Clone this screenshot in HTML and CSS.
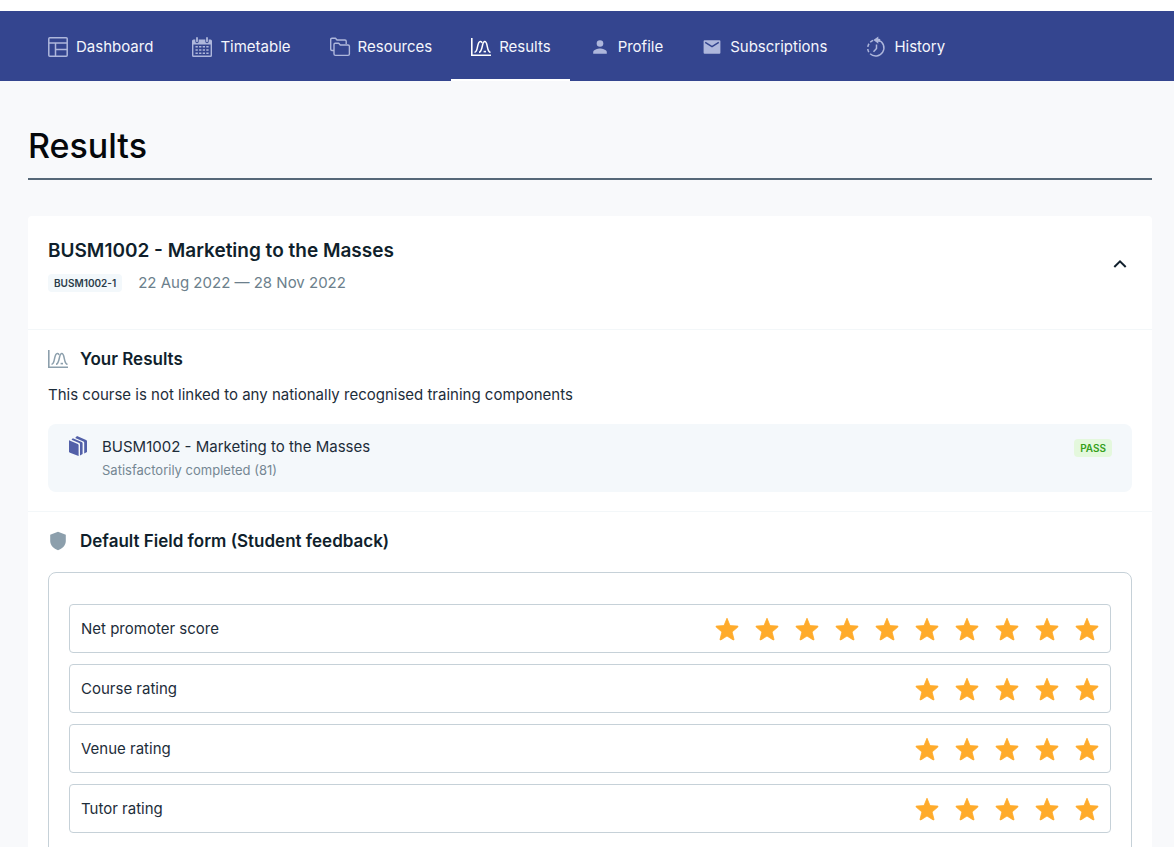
FILE: index.html
```html
<!DOCTYPE html>
<html lang="en">
<head>
<meta charset="utf-8">
<meta name="viewport" content="width=device-width, initial-scale=1">
<title>Results</title>
<link rel="stylesheet" href="styles.css">
</head>
<body>
<svg class="sprite" aria-hidden="true">
  <symbol id="star" viewBox="0 0 24 24"><path d="M12 1.2 15 8.6 22.6 9.1Q23.5 9.4 22.8 10.1L17.1 14.9 19 22.4Q18.9 23.3 18.1 22.9L12 19 5.9 22.9Q5.1 23.3 5 22.4L6.9 14.9 1.2 10.1Q.5 9.4 1.4 9.1L9 8.6Z" fill="currentColor" stroke="currentColor" stroke-width=".8" stroke-linejoin="round"/></symbol>
  <symbol id="chart" viewBox="0 0 20 20"><g fill="none" stroke="currentColor"><path d="M.8 1v17.2H20" stroke-width="1.6"/><path d="M3.500 15.200C7.500 15.200 5.500 5 9.300 4.600c1-.1 1.500.4 1.800 1.400" stroke-width="1.500"/><path d="M8 15.200c4 0 2.500-10.600 5.800-10.600S15.500 15.200 19.500 15.200" stroke-width="1.500"/><path d="M12.600 14.600h2.400" stroke-width="1.600"/></g></symbol>
</svg>
<header class="topbar">
  <nav class="nav" aria-label="Main">
    <a class="nav-link" href="#dashboard"><svg class="icon" viewBox="0 0 20 20"><g fill="none" stroke="currentColor" stroke-width="1.5"><rect x=".8" y=".8" width="18.4" height="18.4" rx="1"/><path d="M1 6h18M7.5 6v13M7.5 12.5H19"/></g></svg>Dashboard</a>
    <a class="nav-link" href="#timetable"><svg class="icon" viewBox="0 0 20 20"><path fill="currentColor" fill-rule="evenodd" d="M1.5 2.500h1.800V4.500a1.700 1.700 0 0 0 3.400 0V2.500h6.600v2a1.700 1.700 0 0 0 3.400 0v-2h1.800Q20 2.500 20 4v14.500Q20 20 18.500 20h-17Q0 20 0 18.500V4Q0 2.500 1.500 2.500ZM1.400 7.500v11.100h17.200V7.500Z"/><path stroke="currentColor" stroke-width="1.800" stroke-linecap="round" d="M5 .9v3.400M15 .9v3.400"/><path stroke="currentColor" stroke-width="1.600" stroke-dasharray="2.300 1.300" d="M3.500 9.800h13.100M3.500 13h13.100M3.500 16.200h13.100"/></svg>Timetable</a>
    <a class="nav-link" href="#resources"><svg class="icon" viewBox="0 0 20 20"><g fill="none" stroke="currentColor" stroke-width="1.400" stroke-linejoin="round"><path d="M4 13.500H2Q.7 13.500.7 12V2.500Q.7 1.200 2 1.200h3.500L7 3h8q1.200 0 1.200 1.200V7"/><path d="M4 7.500Q4 6.200 5.200 6.200h3.500L10.300 8H18q1.400 0 1.400 1.300v7.700q0 1.400-1.400 1.400H5.500Q4 18.400 4 17Z"/></g></svg>Resources</a>
    <a class="nav-link active" href="#results" aria-current="page"><svg class="icon"><use href="#chart"/></svg>Results</a>
    <a class="nav-link" href="#profile"><svg class="icon" viewBox="0 0 20 20"><g fill="currentColor"><circle cx="10" cy="6.500" r="3.300"/><path d="M3.200 16.700v-1.800c0-2.300 4.600-3.500 6.800-3.500s6.800 1.200 6.800 3.500v1.800Z"/></g></svg>Profile</a>
    <a class="nav-link" href="#subscriptions"><svg class="icon" viewBox="0 0 20 20"><path fill="currentColor" d="M2.600 3.200h14.800q1 0 1 1v11.600q0 1-1 1H2.600q-1 0-1-1V4.200q0-1 1-1Z"/><path fill="none" stroke="#34458f" stroke-width="1.500" d="m3.200 5.400 6.800 4.300 6.800-4.300"/></svg>Subscriptions</a>
    <a class="nav-link" href="#history"><svg class="icon" viewBox="0 0 20 20"><g fill="none" stroke="currentColor" stroke-width="1.500"><path d="M12.500 3.100a8.200 8.200 0 1 1-8.400 13.700"/><path d="M2.800 15.200a8.200 8.200 0 0 1 5-12" stroke-dasharray="3.400 2"/><path d="M10.500 7.500v4L7.500 14.800"/></g><path fill="currentColor" d="m7.400 3 4.900-3.500v2.200l2 .4-.5 3-1.500-.4v2Z"/></svg>History</a>
  </nav>
</header>
<main class="page">
  <h1 class="page-title">Results</h1>
  <article class="card">
    <header class="course">
      <div class="course-info">
        <h2 class="course-title">BUSM1002 - Marketing to the Masses</h2>
        <div class="course-meta"><span class="tag">BUSM1002-1</span><span>22 Aug 2022 — 28 Nov 2022</span></div>
      </div>
      <button class="toggle" type="button" aria-label="Collapse course" aria-expanded="true"><svg class="chevron" viewBox="0 0 14 14"><path d="m1.300 10 5.700-5.700L12.700 10" fill="none" stroke="currentColor" stroke-width="2"/></svg></button>
    </header>
    <section class="section">
      <h3 class="section-title"><svg class="icon"><use href="#chart"/></svg>Your Results</h3>
      <p class="note">This course is not linked to any nationally recognised training components</p>
      <div class="result">
        <svg class="icon books" viewBox="0 0 20 20"><g fill="currentColor"><path d="M1 4.200 9.800 7.900q.8.400.8 1.200V20L2 16.800Q1 16.300 1 15.300Z"/><path d="m4.800 2.200 8.900 3.700q.9.400.9 1.400v10.800l-2.600 1.400V8.200q0-.9-.8-1.200L3.500 3.700Z"/><path d="m9 .1 9.100 3.800q.9.400.9 1.400v10.800l-2.800 1.500V6.600q0-.9-.8-1.200L7.200 1.900Z"/></g></svg>
        <div class="result-text">
          <p class="result-name">BUSM1002 - Marketing to the Masses</p>
          <p class="result-status">Satisfactorily completed (81)</p>
        </div>
        <span class="tag pass">PASS</span>
      </div>
    </section>
    <section class="section">
      <h3 class="section-title"><svg class="icon" viewBox="0 0 20 20"><path fill="currentColor" d="M10 .8 17.800 3.800v6.200c0 4.500-3.500 7.600-7.800 9.200C5.700 17.600 2.200 14.500 2.200 10V3.800Z"/></svg>Default Field form (Student feedback)</h3>
      <div class="feedback">
        <div class="rating"><span>Net promoter score</span><span class="stars" role="img" aria-label="10 stars"><svg class="star"><use href="#star"/></svg><svg class="star"><use href="#star"/></svg><svg class="star"><use href="#star"/></svg><svg class="star"><use href="#star"/></svg><svg class="star"><use href="#star"/></svg><svg class="star"><use href="#star"/></svg><svg class="star"><use href="#star"/></svg><svg class="star"><use href="#star"/></svg><svg class="star"><use href="#star"/></svg><svg class="star"><use href="#star"/></svg></span></div>
        <div class="rating"><span>Course rating</span><span class="stars" role="img" aria-label="5 stars"><svg class="star"><use href="#star"/></svg><svg class="star"><use href="#star"/></svg><svg class="star"><use href="#star"/></svg><svg class="star"><use href="#star"/></svg><svg class="star"><use href="#star"/></svg></span></div>
        <div class="rating"><span>Venue rating</span><span class="stars" role="img" aria-label="5 stars"><svg class="star"><use href="#star"/></svg><svg class="star"><use href="#star"/></svg><svg class="star"><use href="#star"/></svg><svg class="star"><use href="#star"/></svg><svg class="star"><use href="#star"/></svg></span></div>
        <div class="rating"><span>Tutor rating</span><span class="stars" role="img" aria-label="5 stars"><svg class="star"><use href="#star"/></svg><svg class="star"><use href="#star"/></svg><svg class="star"><use href="#star"/></svg><svg class="star"><use href="#star"/></svg><svg class="star"><use href="#star"/></svg></span></div>
      </div>
    </section>
  </article>
</main>
</body>
</html>
```
FILE: styles.css
```css
* { box-sizing: border-box; }
html { background: #f8f9fb; overflow-x: hidden; scrollbar-width: none; }
body { margin: 0; font-family: Inter, "Liberation Sans", sans-serif; font-size: 15px; line-height: 20px; color: #1d2d3a; }
h1, h2, h3, p { margin: 0; }
.sprite { position: absolute; width: 0; height: 0; }
.icon { width: 20px; height: 20px; flex: none; overflow: visible; }

.topbar { border-top: 11px solid #fff; background: #34458f; padding: 0 28px; }
.nav { display: flex; height: 70px; }
.nav-link { display: flex; align-items: center; gap: 8px; padding: 4px 19px 0 20px; border-bottom: 2px solid transparent; color: #f4f6fc; text-decoration: none; white-space: nowrap; }
.nav-link .icon { color: #aeb7dc; }
.nav-link.active { border-color: #fff; }
.nav-link.active .icon { color: #fff; }

.page { padding: 45px 22px 0 28px; }
.page-title { font-size: 34px; font-weight: 500; line-height: 40px; color: #05080b; padding-bottom: 12px; border-bottom: 2px solid #566878; }
.card { margin-top: 36px; background: #fff; border-radius: 4px; }
.course { display: flex; align-items: flex-start; justify-content: space-between; padding: 23px 20px 36px; }
.course-title { font-size: 19px; font-weight: 600; line-height: 24px; color: #101f2c; }
.course-meta { display: flex; align-items: center; gap: 16px; margin-top: 10px; color: #6c7f8c; }
.tag { padding: 0 6px; border-radius: 4px; background: #f3f8fb; color: #2b3d4a; font-size: 10px; font-weight: 600; line-height: 18px; }
.toggle { width: 24px; height: 24px; margin-top: 13px; padding: 0; border: 0; background: none; color: #101f2c; display: grid; place-items: center; cursor: pointer; }
.chevron { width: 14px; height: 14px; }

.section { border-top: 1px solid #f3f7f9; padding: 19px 20px; }
.section-title { display: flex; align-items: center; gap: 12px; font-size: 17px; font-weight: 600; line-height: 20px; color: #101f2c; }
.section-title .icon { color: #8c9fac; }
.note { margin-top: 16px; }
.result { display: flex; align-items: flex-start; gap: 14px; margin-top: 19px; padding: 12px 20px; border-radius: 8px; background: #f4f8fb; }
.books { color: #5260a8; }
.result-text { flex: 1; }
.result-name { line-height: 22px; }
.result-status { margin-top: 2px; font-size: 13px; color: #748793; }
.pass { margin-top: 3px; background: #e4f8dd; color: #35a01b; }
.feedback { display: grid; gap: 11px; margin-top: 21px; padding: 31px 20px; border: 1px solid #c6d1d8; border-radius: 8px; }
.rating { display: flex; align-items: center; justify-content: space-between; height: 49px; padding: 0 11px; border: 1px solid #c6d1d8; border-radius: 4px; }
.stars { display: flex; gap: 16px; color: #ffab2b; }
.star { width: 24px; height: 24px; }
```
